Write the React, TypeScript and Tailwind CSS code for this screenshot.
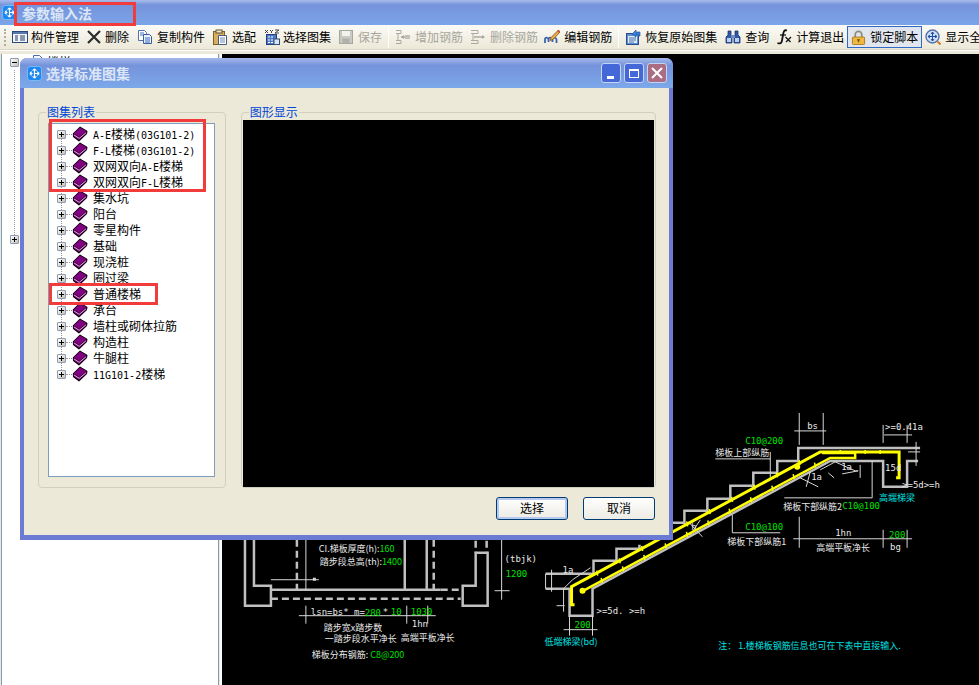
import React from "react";

const M = ({ children }: { children: React.ReactNode }) => (
  <span className="font-['DejaVu_Sans_Mono',monospace] text-[10px]">{children}</span>
);

const AppLogo = ({ cls }: { cls: string }) => (
  <svg viewBox="0 0 16 16" className={cls}>
    <rect x="0.5" y="0.5" width="15" height="15" rx="3" fill="#1E88F0" stroke="#7CC0FA" />
    <path d="M8 3v10M8 8h5M4 8h2M8 3l-2 2M8 3l2 2M13 8l-2-2M13 8l-2 2M3 8l2-2M3 8l2 2M8 13l-2-2M8 13l2-2" stroke="#fff" strokeWidth="1.2" fill="none" />
  </svg>
);

const Book = () => (
  <svg viewBox="0 0 16 16" className="w-4 h-4 shrink-0">
    <path d="M8 0.5 15.5 5 15 8 7 15.5 1 11 0.8 7.5Z" fill="#000" />
    <path d="M8 1.5 14.5 5.2 7.3 11 1.6 7.5Z" fill="#800080" />
    <path d="M1.5 8 7.3 11.6 14.5 6 14.5 7.5 7.2 14 1.6 10.2Z" fill="#800080" />
    <path d="M2 9 7.2 12.3 14 6.8" stroke="#E8D8E8" strokeWidth="0.8" fill="none" />
  </svg>
);

const Plus = ({ minus }: { minus?: boolean }) => (
  <span className="relative w-[9px] h-[9px] border border-[#8C9CB4] bg-gradient-to-br from-white to-[#C4C0B4] flex items-center justify-center shrink-0 rounded-[1px]">
    <span className="absolute w-[5px] h-px bg-black" />
    {!minus && <span className="absolute w-px h-[5px] bg-black" />}
  </span>
);

const icons: Record<string, React.ReactNode> = {
  manage: (
    <>
      <rect x="0.5" y="2.5" width="15" height="11" fill="#F4F6FA" stroke="#2A4A7C" />
      <rect x="1" y="3" width="14" height="2" fill="#5878B0" />
      <path d="M3 7h3M3 9h3M3 11h3M8 7h5M8 9h5M8 11h5" stroke="#1E3660" />
    </>
  ),
  del: <path d="M2 2 14 14M14 2 2 14" stroke="#2C2C2C" strokeWidth="2.2" />,
  copy: (
    <>
      <path d="M1.5 1.5h6l2 2v8h-8z" fill="#fff" stroke="#5470A4" />
      <path d="M6.5 5.5h6l2 2v7h-8z" fill="#E8F0FC" stroke="#3C5C9C" />
      <path d="M3 4h4M3 6h3M8 9h5M8 11h5M8 13h5" stroke="#3C6CC0" />
    </>
  ),
  clip: (
    <>
      <rect x="1.5" y="2.5" width="11" height="13" fill="#D4B060" stroke="#806020" />
      <rect x="4" y="1" width="6" height="3" fill="#F0E8C8" stroke="#605030" />
      <path d="M6.5 6.5h8v9h-8z" fill="#fff" stroke="#4A5C84" />
      <path d="M8 9h5M8 11h5M8 13h5" stroke="#7088B8" />
    </>
  ),
  atlas: (
    <>
      <path d="M1 1l3 3M4 1 1 4M6 1l1.500 1.500L9 1M7.500 2.500V4M11 1h4l-4 3h4" stroke="#30343C" strokeWidth="0.9" fill="none" />
      <rect x="2.500" y="5.500" width="10" height="10" fill="#4C78C4" stroke="#24407C" />
      <path d="M4 8h2M7 8h2M4 11h2M7 11h2M4 13.500h2M7 13.500h2" stroke="#fff" strokeWidth="1.200" />
      <rect x="10" y="10" width="5.500" height="5.500" fill="#D8E4F4" stroke="#30507C" />
    </>
  ),
  save: (
    <>
      <rect x="1.500" y="1.500" width="13" height="13" fill="#CACAC4" stroke="#A6A6A0" />
      <rect x="4" y="2" width="8" height="5" fill="#F2F2EE" />
      <rect x="4.500" y="9.500" width="7" height="5" fill="#B0B0AA" />
    </>
  ),
  add: (
    <>
      <path d="M1 1.500h5v3H1M1 11.500h5v3H1M3 4.500v7" stroke="#ABA89E" fill="none" />
      <path d="M6 8h9" stroke="#ABA89E" strokeWidth="1.500" />
      <rect x="10" y="6" width="5" height="4" fill="#C4C1B6" />
      <path d="M6 8l3-2v4z" fill="#ABA89E" />
    </>
  ),
  rem: (
    <>
      <path d="M1 1.500h7v3H1M1 11.500h7v3H1M3 4.500v7" stroke="#ABA89E" fill="none" />
      <path d="M4 8h10" stroke="#ABA89E" strokeWidth="1.500" />
      <path d="M15 8l-3-2v4z" fill="#ABA89E" />
    </>
  ),
  edit: (
    <>
      <path d="M1 14V10.500C1 8 4 8 4.500 10.500V13M4.500 10.500C4.500 8 8 8 8.500 10.500V13M8.500 10.500C8.500 8 12 8 12.500 10.500V14" stroke="#3C64AC" strokeWidth="1.800" fill="none" />
      <path d="M14.500 1 7 8.500l-1 3 3-1L16 3z" fill="#E8B040" stroke="#7C5020" strokeWidth="0.800" />
      <path d="M14.500 1 16 3l-1 1-2-2z" fill="#D05030" />
    </>
  ),
  restore: (
    <>
      <rect x="1.500" y="4.500" width="12" height="11" fill="#5C90D4" stroke="#2C4C8C" />
      <rect x="3" y="7" width="9" height="7" fill="#DDEAF8" />
      <path d="M4 9h7M4 11h7M4 13h5" stroke="#5070A8" />
      <path d="M7 5 11 1v2h4v4h-2v-2h-2v3z" fill="#3C80DC" stroke="#1C4C94" strokeWidth="0.600" />
    </>
  ),
  find: (
    <>
      <path d="M3 2h3v4l1 1v7H1V8l2-2zM10 2h3v4l2 2v6H9V7l1-1z" fill="#3058A4" stroke="#1C3670" strokeWidth="0.800" />
      <rect x="2" y="9" width="4" height="4" fill="#BCD0F0" />
      <rect x="10" y="9" width="4" height="4" fill="#BCD0F0" />
      <rect x="6" y="6" width="4" height="3" fill="#6E8CC4" />
    </>
  ),
  fx: (
    <>
      <path d="M11 1.500C8 0.500 7.500 3 7 6L6 11.500C5.500 14.500 4 15 1.500 14" stroke="#141414" strokeWidth="1.800" fill="none" />
      <path d="M4 6h6" stroke="#141414" strokeWidth="1.300" />
      <path d="M9.500 8l5 5M15 8l-5 5" stroke="#141414" strokeWidth="1.300" />
    </>
  ),
  lock: (
    <>
      <path d="M4.500 8V5a3.500 3.500 0 0 1 7 0v3" stroke="#8C8C7C" strokeWidth="1.800" fill="none" />
      <rect x="1.500" y="7.500" width="13" height="8" rx="1" fill="#F0B840" stroke="#A87C20" />
      <path d="M8 10v3M6.500 10.500h3" stroke="#6C4C10" strokeWidth="1.200" />
    </>
  ),
  zoom: (
    <>
      <circle cx="7.500" cy="7.500" r="6.500" fill="#CFE0F6" stroke="#5470A8" strokeWidth="1.400" />
      <path d="M7.500 3v9M3 7.500h9M7.500 3l-1.500 2M7.500 3 9 5M7.500 12 6 10M7.500 12 9 10M3 7.500 5 6M3 7.500 5 9M12 7.500 10 6M12 7.500 10 9" stroke="#1C4CA0" fill="none" />
      <path d="M12.500 12.500 15.500 15.500" stroke="#D87C20" strokeWidth="2" />
    </>
  ),
};

const Tool = ({ icon, text, off, cls = "gap-1" }: { icon: string; text: string; off?: boolean; cls?: string }) => (
  <div className={`flex items-center shrink-0 ${off ? "text-[#A8A69C]" : "text-black"} ${cls}`}>
    <svg viewBox="0 0 16 16" className="w-4 h-4 shrink-0">
      {icons[icon]}
    </svg>
    <span>{text}</span>
  </div>
);

const Sep = () => <span className="w-px h-[22px] mx-[-1px] bg-[#B8B6A8] border-r border-white shrink-0" />;

const treeRows: React.ReactNode[] = [
  <><M>A-E</M>楼梯<M>(03G101-2)</M></>,
  <><M>F-L</M>楼梯<M>(03G101-2)</M></>,
  <>双网双向<M>A-E</M>楼梯</>,
  <>双网双向<M>F-L</M>楼梯</>,
  "集水坑",
  "阳台",
  "零星构件",
  "基础",
  "现浇桩",
  "圈过梁",
  "普通楼梯",
  "承台",
  "墙柱或砌体拉筋",
  "构造柱",
  "牛腿柱",
  <><M>11G101-2</M>楼梯</>,
];

const G = "#C0C0C0";
const W = "#D8D8D8";
const GR = "#00E000";
const CY = "#00E0E0";

const T = ({ x, y, c = "#E8E8E8", m, s, children }: { x: number; y: number; c?: string; m?: boolean; s?: number; children: React.ReactNode }) => (
  <text x={x} y={y} fill={c} fontSize={s ?? 9} fontFamily={m ? "'DejaVu Sans Mono', monospace" : "'Noto Sans CJK SC', sans-serif"}>
    {children}
  </text>
);

const ticks = (x1: number, y1: number, x2: number, y2: number, n: number) =>
  Array.from({ length: n }, (_, i) => {
    const t = (i + 0.5) / n;
    const x = x1 + (x2 - x1) * t;
    const y = y1 + (y2 - y1) * t;
    return `M${x} ${y - 3}l1 5`;
  }).join("");

const Cad = () => (
  <svg viewBox="221 54 758 631" className="w-full h-full block">
    {/* stairs outline */}
    <g stroke={G} strokeWidth="2.500" fill="none">
      <path d="M920 448H798V461H777V473H753V486H730V499H707V511H684V523H660" />
      <path d="M639 545V549H616V561H593V574H545" />
      <path d="M545 589H569V616H592V589L830 461H883V487H907V461H918" />
      <path d="M244 530V606H270V586H253V530" />
      <path d="M270 590H440M462 586H475V553H487V606H462Z" />
      <path d="M440 590H460M270 599H460M296 540V590M433 540V590M475 530V553M486 530V553" strokeDasharray="7 4" />
      <path d="M404 530V590M426 530V590" />
    </g>
    {/* dimension lines */}
    <g stroke={W} strokeWidth="1" fill="none">
      <path d="M305 530V590M501 530V600M494 591H509M270 580H318M298 616H435M305 606V624M406 606V624M427 606V624" />
      <path d="M794 431H826M799 413V445M823 413V445M884 435H912M883 425V443M907 425V443M916 442V466M908 452H920" />
      <path d="M770 452V478M715 459H770M872 461V498H784M732 515V533H780M793 539H912M799 517V548M883 530V548M907 530V548" />
      <path d="M545 574V589M551 570V592M563 589V612M556 606H564M563 589L572 580L590 568M563 630H597M569 616V636M592 616V636" />
      <path d="M820 470L835 462L855 471H858M800 478L818 487M842 474L858 471M860 465V478M806 487L810 472M828 473L834 478" />
      <path d="M688 522L702 537M690 535L700 520" />
    </g>
    <rect x="312" y="578" width="3" height="3" fill={W} />
    {/* rebar */}
    <g stroke="#FFFF00" fill="none" strokeWidth="3">
      <path d="M574 605H571V587L820 452H899V478H896" />
      <path d="M583 591L830 458H855V453H822" strokeWidth="2.500" />
      <path d={ticks(585, 580, 810, 457, 10)} strokeWidth="1.500" />
      <path d={ticks(590, 587, 825, 460, 11)} strokeWidth="1.500" />
      <path d="M840 450v4M865 450v4M880 450v4" strokeWidth="1.500" />
      <circle cx="797" cy="467" r="1.500" fill="#FFFF00" />
      <circle cx="582" cy="591" r="1.500" />
    </g>
    {/* upper right labels */}
    <T x={745} y={444} c={GR} m>C10@200</T>
    <T x={715} y={456}>梯板上部纵筋</T>
    <T x={807} y={429} m>bs</T>
    <T x={885} y={430} m>&gt;=0.41a</T>
    <T x={885} y={471} m>15d</T>
    <T x={841} y={470} m>1a</T>
    <T x={811} y={480} m>1a</T>
    <T x={902} y={488} m>&gt;=5d&gt;=h</T>
    <T x={879} y={501} c={CY}>高端梯梁</T>
    <T x={783} y={510}>梯板下部纵筋2</T>
    <T x={842} y={509} c={GR} m>C10@100</T>
    <T x={691} y={530} m>h</T>
    <T x={745} y={530} c={GR} m>C10@100</T>
    <T x={727} y={545}>梯板下部纵筋1</T>
    <T x={835} y={536} m>1hn</T>
    <T x={889} y={538} c={GR} m>200</T>
    <T x={890} y={550} m>bg</T>
    <T x={816} y={551}>高端平板净长</T>
    {/* lower right labels */}
    <T x={562} y={573} m>1a</T>
    <T x={596} y={614} m>&gt;=5d. &gt;=h</T>
    <T x={574} y={628} c={GR} m>200</T>
    <T x={544} y={645} c={CY}>低端梯梁(bd)</T>
    <T x={718} y={649} c={CY}>注： 1.楼梯板钢筋信息也可在下表中直接输入.</T>
    {/* lower left labels */}
    <T x={318} y={552}>CI.梯板厚度(h):<tspan fill={GR}>160</tspan></T>
    <T x={319} y={565}>踏步段总高(th):<tspan fill={GR}>1400</tspan></T>
    <T x={504} y={562} m>(tbjk)</T>
    <T x={505} y={577} c={GR} m>1200</T>
    <T x={310} y={615} m>lsn=bs* m=</T>
    <T x={364} y={616} c={GR} m>280</T>
    <T x={382} y={615} m>*</T>
    <T x={390} y={615} c={GR} m>10</T>
    <T x={410} y={615} c={GR} m>1030</T>
    <T x={411} y={627} m>1hn</T>
    <T x={323} y={631}>踏步宽x踏步数</T>
    <T x={324} y={642}>一踏步段水平净长</T>
    <T x={400} y={641}>高端平板净长</T>
    <T x={311} y={658}>梯板分布钢筋: <tspan fill={GR}>C8@200</tspan></T>
  </svg>
);

const WinBtn = ({ cls, children }: { cls: string; children: React.ReactNode }) => (
  <div className={`w-[20px] h-[20px] rounded-[3px] border border-[#C4D4F4] flex items-center justify-center ${cls}`}>{children}</div>
);

const Group = ({ title, cls, children }: { title: string; cls: string; children: React.ReactNode }) => (
  <div className={`relative border border-[#D0D0BF] rounded-[4px] h-[376px] ${cls}`}>
    <span className="absolute left-[7px] top-[-8px] h-[14px] leading-[14px] text-[#0046D5] bg-[#ECE9D8] px-px">{title}</span>
    {children}
  </div>
);

export default function App() {
  return (
    <div className="relative w-[979px] h-[685px] overflow-hidden flex flex-col bg-[#ECE9D8] text-[12px] leading-none text-black font-[family-name:'Noto_Sans_CJK_SC',sans-serif]">
      {/* main title bar */}
      <div className="h-[25px] shrink-0 flex items-center pl-[2px] gap-[5px] bg-gradient-to-b from-[#A8BCEA] via-[#7593DB] via-[20%] to-[#7CA4E8]">
        <AppLogo cls="w-[15px] h-[15px]" />
        <span className="text-[14px] font-bold text-[#DCE6F6]">参数输入法</span>
      </div>

      {/* toolbar */}
      <div className="h-[25px] shrink-0 flex items-center gap-[7px] pl-[4px] bg-gradient-to-b from-[#FBFAF6] to-[#ECE9D8] border-b border-[#D8D6C8] overflow-hidden">
        <span className="w-[2px] h-[17px] mr-[-1px] border-l-2 border-dotted border-[#B0AE9E] shrink-0" />
        <Tool icon="manage" text="构件管理" cls="gap-[3px]" />
        <Tool icon="del" text="删除" cls="gap-[3px] mr-px" />
        <Tool icon="copy" text="复制构件" />
        <Tool icon="clip" text="选配" />
        <Tool icon="atlas" text="选择图集" cls="gap-[3px] ml-px" />
        <Tool icon="save" text="保存" off />
        <Sep />
        <Tool icon="add" text="增加钢筋" off />
        <Tool icon="rem" text="删除钢筋" off cls="gap-1 mr-[-1px]" />
        <Tool icon="edit" text="编辑钢筋" />
        <Sep />
        <Tool icon="restore" text="恢复原始图集" />
        <Tool icon="find" text="查询" cls="gap-1 ml-px" />
        <Tool icon="fx" text="计算退出" />
        <div className="flex items-center gap-[4px] w-[75px] h-[22px] pl-[3px] ml-[-4px] mr-[-4px] border border-[#316AC5] bg-[#E1E6EE] shrink-0">
          <svg viewBox="0 0 16 16" className="w-[15px] h-[15px] shrink-0">{icons.lock}</svg>
          <span>锁定脚本</span>
        </div>
        <Tool icon="zoom" text="显示全图" />
      </div>

      {/* body */}
      <div className="flex-1 flex pt-[3px] bg-[#ECE9D8] min-h-0 border-t border-white">
        <div className="w-[218px] shrink-0 bg-white border-x border-[#7F9DB9] ml-px relative pl-[8px]">
          <div className="flex items-center h-[16px]">
            <Plus minus />
            <svg viewBox="0 0 16 16" className="w-4 h-4 ml-[11px] shrink-0">
              <path d="M3.500 1.500h6l3 3v10h-9z" fill="#F4F8FE" stroke="#4A6CA8" />
            </svg>
            <span className="ml-px">楼梯</span>
          </div>
          <div className="h-[165px] w-0 ml-[4px] border-l border-dotted border-[#999]" />
          <Plus />
        </div>
        <div className="flex-1 bg-black ml-[1px] border-l-2 border-white min-w-0">
          <Cad />
        </div>
      </div>

      {/* dialog */}
      <div className="absolute left-[20px] top-[58px] w-[653px] h-[482px] rounded-t-[7px] bg-[#6B7AD2] flex flex-col px-[4px] pb-[5px]">
        <div className="h-[30px] shrink-0 -mx-[4px] rounded-t-[7px] flex items-center pl-[7px] pr-[6px] gap-[4px] bg-gradient-to-b from-[#A4B8EA] via-[#7593DB] via-[25%] to-[#7CA8EA]">
          <AppLogo cls="w-[15px] h-[15px]" />
          <span className="text-[14px] font-bold text-[#DCE6F6] flex-1">选择标准图集</span>
          <div className="flex gap-[3px]">
            <WinBtn cls="bg-[#4468D8]"><span className="w-[7px] h-[3px] bg-white mt-[8px] mr-[2px]" /></WinBtn>
            <WinBtn cls="bg-[#4468D8]"><span className="w-[10px] h-[9px] border border-t-2 border-white" /></WinBtn>
            <WinBtn cls="bg-[#AC6C84]">
              <svg viewBox="0 0 12 12" className="w-3 h-3"><path d="M1 1 11 11M11 1 1 11" stroke="#fff" strokeWidth="2" /></svg>
            </WinBtn>
          </div>
        </div>
        <div className="flex-1 bg-[#ECE9D8] pt-[24px] pl-[14px] pr-[13px] flex flex-col min-h-0">
          <div className="flex gap-[15px]">
            <Group title="图集列表" cls="w-[188px] pt-[10px] pl-[9px] pr-[10px]">
              <div className="relative h-[354px] border border-[#7F9DB9] bg-white pt-[2px] pl-[8px]">
                <span className="absolute left-[12px] top-[10px] h-[240px] w-0 border-l border-dotted border-[#999]" />
                {treeRows.map((r, i) => (
                  <div key={i} className="relative h-[16px] flex items-center">
                    <Plus />
                    <span className="w-[6px] h-0 border-t border-dotted border-[#999] shrink-0" />
                    <Book />
                    <span className="ml-[5px] whitespace-nowrap">{r}</span>
                  </div>
                ))}
              </div>
            </Group>
            <Group title="图形显示" cls="w-[416px] pt-[7px] px-[1px]">
              <div className="h-[367px] bg-black" />
            </Group>
          </div>
          <div className="flex justify-end gap-[15px] mt-[9px] pr-px">
            <button className="w-[72px] h-[23px] pb-[2px] rounded-[3px] border border-[#003C74] bg-gradient-to-b from-white to-[#ECEBE4] shadow-[inset_0_0_0_2px_#B4C8F0] text-[12px]">选择</button>
            <button className="w-[72px] h-[23px] pb-[2px] rounded-[3px] border border-[#003C74] bg-gradient-to-b from-white to-[#ECEBE4] text-[12px]">取消</button>
          </div>
        </div>
      </div>

      {/* annotation boxes */}
      <div className="absolute left-[14px] top-[2px] w-[122px] h-[24px] border-[3px] border-[#F23C3C]" />
      <div className="absolute left-[49px] top-[119px] w-[157px] h-[73px] border-[3px] border-[#F23C3C]" />
      <div className="absolute left-[49px] top-[283px] w-[109px] h-[22px] border-[3px] border-[#F23C3C]" />
    </div>
  );
}
